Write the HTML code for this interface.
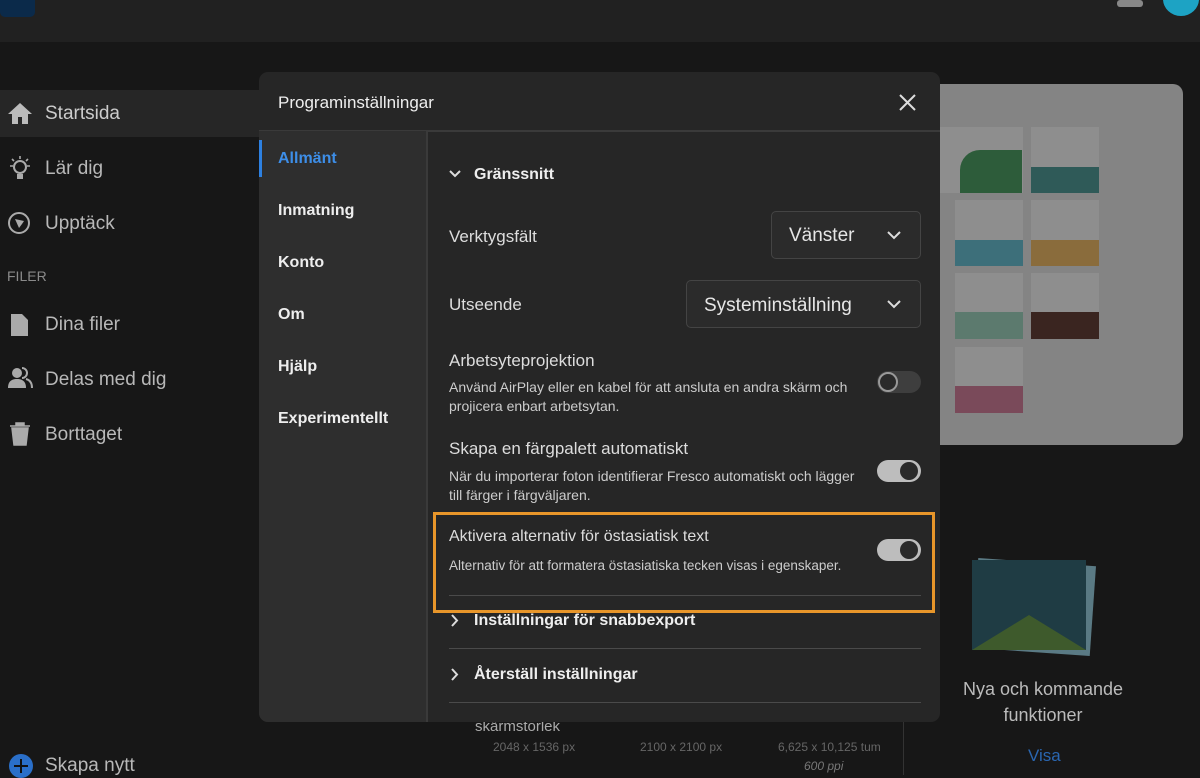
<!DOCTYPE html>
<html><head><meta charset="utf-8"><style>
*{margin:0;padding:0;box-sizing:border-box}
body{width:1200px;height:775px;overflow:hidden;background:#171717;font-family:"Liberation Sans",sans-serif;position:relative;color:#ddd}
.a{position:absolute}
.top{left:0;top:0;width:1200px;height:42px;background:#212121}
.side{color:#b8b8b8;font-size:19px}
.dlg{left:259px;top:72px;width:681px;height:650px;background:#262626;border-radius:9px;overflow:hidden}
.nav{left:0;top:59px;width:169px;height:600px;background:#2e2e2e;border-right:2px solid #3a3a3a}
.nav div{position:absolute;left:19px;font-weight:bold;font-size:16px;color:#eee}
.lbl{font-size:17px;color:#ddd}
.desc{font-size:14px;color:#ccc;line-height:19px}
.dd{border:1px solid #444;border-radius:5px;background:#2b2b2b;font-size:19px;color:#e6e6e6}
.tg{width:44px;height:22px;border-radius:11px}
.line{height:1px;background:#4a4a4a;left:190px;width:472px}
</style></head><body>
<div class="a top"></div>
<div class="a" style="left:0;top:-10px;width:35px;height:27px;background:#0b2a4a;border-radius:5px"></div>
<div class="a" style="left:1117px;top:0;width:26px;height:7px;background:#888;border-radius:3px"></div>
<div class="a" style="left:1163px;top:-18px;width:36px;height:34px;background:#1da3c4;border-radius:50%"></div>
<div class="a" style="left:0;top:90px;width:260px;height:47px;background:#262626"></div>
<svg class="a" style="left:7px;top:102px" width="26" height="24" viewBox="0 0 26 24"><path d="M13 1 L1 12 H5 V22 H11 V15 H15 V22 H21 V12 H25 Z" fill="#bbb"/></svg>
<div class="a side" style="left:45px;top:103px;color:#ccc">Startsida</div>
<svg class="a" style="left:7px;top:155px" width="26" height="28" viewBox="0 0 26 28"><circle cx="13" cy="12" r="6" fill="none" stroke="#aaa" stroke-width="2"/><path d="M10 19h6v5h-6z" fill="#aaa"/><path d="M13 1v3M3 11h3M20 11h3M5 4l2 2M21 4l-2 2" stroke="#aaa" stroke-width="1.6"/></svg>
<div class="a side" style="left:45px;top:158px">Lär dig</div>
<svg class="a" style="left:7px;top:211px" width="26" height="26"><circle cx="12" cy="12" r="10" fill="none" stroke="#aaa" stroke-width="2"/><path d="M8 8l9 2-2 3-3 4z" fill="#aaa"/></svg>
<div class="a side" style="left:45px;top:213px">Upptäck</div>
<div class="a" style="left:7px;top:268px;font-size:14px;color:#8a8a8a">FILER</div>
<svg class="a" style="left:10px;top:313px" width="20" height="24"><path d="M1 1h11l6 6v16H1z" fill="#aaa"/></svg>
<div class="a side" style="left:45px;top:314px">Dina filer</div>
<svg class="a" style="left:7px;top:366px" width="26" height="24"><circle cx="10" cy="7" r="5" fill="#aaa"/><path d="M1 22c0-7 4-9 9-9s9 2 9 9z" fill="#aaa"/><path d="M15 2a5 5 0 010 10M19 13c4 1 6 4 6 9" stroke="#aaa" stroke-width="2" fill="none"/></svg>
<div class="a side" style="left:45px;top:369px">Delas med dig</div>
<svg class="a" style="left:9px;top:422px" width="22" height="24"><path d="M1 4h20M7 4V1h8v3M3 6l2 17h12l2-17z" fill="#aaa" stroke="#aaa" stroke-width="1.5"/></svg>
<div class="a side" style="left:45px;top:424px">Borttaget</div>
<div class="a" style="left:9px;top:754px;width:24px;height:24px;border-radius:50%;background:#2a6fc9"></div>
<div class="a" style="left:14px;top:765px;width:14px;height:2px;background:#111"></div>
<div class="a" style="left:20px;top:759px;width:2px;height:14px;background:#111"></div>
<div class="a side" style="left:45px;top:755px">Skapa nytt</div>

<!-- background right panel -->
<div class="a" style="left:900px;top:84px;width:283px;height:361px;background:#848484;border-radius:10px"></div>
<div class="a" style="left:940px;top:127px;width:83px;height:66px;background:#8e8e8e"></div>
<div class="a" style="left:960px;top:150px;width:62px;height:43px;background:#2d5c3a;border-radius:20px 0 0 0"></div>
<div class="a" style="left:1031px;top:127px;width:68px;height:66px;background:#8e8e8e"></div>
<div class="a" style="left:1031px;top:167px;width:68px;height:26px;background:#2f5a58"></div>
<div class="a" style="left:955px;top:200px;width:68px;height:66px;background:#8e8e8e"></div>
<div class="a" style="left:955px;top:240px;width:68px;height:26px;background:#3d6f7a"></div>
<div class="a" style="left:1031px;top:200px;width:68px;height:66px;background:#8e8e8e"></div>
<div class="a" style="left:1031px;top:240px;width:68px;height:26px;background:#8a6c3c"></div>
<div class="a" style="left:955px;top:273px;width:68px;height:66px;background:#8e8e8e"></div>
<div class="a" style="left:955px;top:312px;width:68px;height:27px;background:#5c7a6e"></div>
<div class="a" style="left:1031px;top:273px;width:68px;height:66px;background:#8e8e8e"></div>
<div class="a" style="left:1031px;top:312px;width:68px;height:27px;background:#3a2520"></div>
<div class="a" style="left:955px;top:347px;width:68px;height:66px;background:#8e8e8e"></div>
<div class="a" style="left:955px;top:386px;width:68px;height:27px;background:#7a4a5a"></div>
<div class="a" style="left:975px;top:562px;width:118px;height:90px;background:#5a7a84;transform:rotate(4deg)"></div>
<div class="a" style="left:972px;top:560px;width:114px;height:90px;background:#1f3c44"></div>
<div class="a" style="left:972px;top:615px;width:114px;height:35px;background:#3e5a2c;clip-path:polygon(50% 0,100% 100%,0 100%)"></div>
<div class="a" style="left:940px;top:676px;width:206px;text-align:center;font-size:18px;color:#bbb;line-height:26px">Nya och kommande funktioner</div>
<div class="a" style="left:1028px;top:746px;font-size:17px;color:#2a66b0">Visa</div>
<div class="a" style="left:903px;top:722px;width:1px;height:53px;background:#333"></div>
<div class="a" style="left:475px;top:718px;font-size:15px;color:#aaa">skärmstorlek</div>
<div class="a" style="left:493px;top:740px;font-size:12px;color:#666">2048 x 1536 px</div>
<div class="a" style="left:640px;top:740px;font-size:12px;color:#666">2100 x 2100 px</div>
<div class="a" style="left:778px;top:740px;font-size:12px;color:#666">6,625 x 10,125 tum</div>
<div class="a" style="left:804px;top:759px;font-size:12px;color:#777;font-style:italic">600 ppi</div>

<!-- dialog -->
<div class="a dlg">
  <div class="a" style="left:19px;top:21px;font-size:17px;color:#eee">Programinställningar</div>
  <svg class="a" style="left:640px;top:22px" width="17" height="17"><path d="M1 1L16 16M16 1L1 16" stroke="#ddd" stroke-width="2"/></svg>
  <div class="a" style="left:0;top:58px;width:681px;height:2px;background:#3a3a3a"></div>
  <div class="a nav">
    <div class="a" style="left:0;top:9px;width:3px;height:37px;background:#2d80e0"></div>
    <div style="top:19px;color:#3d8ee8">Allmänt</div>
    <div style="top:71px">Inmatning</div>
    <div style="top:123px">Konto</div>
    <div style="top:175px">Om</div>
    <div style="top:227px">Hjälp</div>
    <div style="top:279px">Experimentellt</div>
  </div>
  <svg class="a" style="left:190px;top:98px" width="12" height="9"><path d="M1 1l5 5 5-5" stroke="#ddd" stroke-width="2" fill="none"/></svg>
  <div class="a" style="left:215px;top:94px;font-weight:bold;font-size:16px;color:#eee">Gränssnitt</div>
  <div class="a lbl" style="left:190px;top:155px">Verktygsfält</div>
  <div class="a dd" style="left:512px;top:139px;width:150px;height:48px"><span class="a" style="left:17px;top:13px">Vänster</span><svg class="a" style="left:115px;top:19px" width="14" height="9"><path d="M1 1l6 6 6-6" stroke="#ddd" stroke-width="2" fill="none"/></svg></div>
  <div class="a lbl" style="left:190px;top:223px">Utseende</div>
  <div class="a dd" style="left:427px;top:208px;width:235px;height:48px"><span class="a" style="left:17px;top:14px">Systeminställning</span><svg class="a" style="left:200px;top:19px" width="14" height="9"><path d="M1 1l6 6 6-6" stroke="#ddd" stroke-width="2" fill="none"/></svg></div>
  <div class="a lbl" style="left:190px;top:279px">Arbetsyteprojektion</div>
  <div class="a desc" style="left:190px;top:306px;width:420px">Använd AirPlay eller en kabel för att ansluta en andra skärm och projicera enbart arbetsytan.</div>
  <div class="a tg" style="left:618px;top:299px;background:#3e3e3e"><div class="a" style="left:1px;top:1px;width:20px;height:20px;border-radius:50%;border:2px solid #999;background:#2a2a2a"></div></div>
  <div class="a lbl" style="left:190px;top:367px">Skapa en färgpalett automatiskt</div>
  <div class="a desc" style="left:190px;top:395px;width:420px">När du importerar foton identifierar Fresco automatiskt och lägger till färger i färgväljaren.</div>
  <div class="a tg" style="left:618px;top:388px;background:#bdbdbd"><div class="a" style="left:23px;top:2px;width:18px;height:18px;border-radius:50%;background:#2a2a2a"></div></div>
  <div class="a lbl" style="left:190px;top:456px;font-size:16px">Aktivera alternativ för östasiatisk text</div>
  <div class="a desc" style="left:190px;top:484px;font-size:13.5px">Alternativ för att formatera östasiatiska tecken visas i egenskaper.</div>
  <div class="a tg" style="left:618px;top:467px;background:#bdbdbd"><div class="a" style="left:23px;top:2px;width:18px;height:18px;border-radius:50%;background:#2a2a2a"></div></div>
  <div class="a line" style="top:523px"></div>
  <svg class="a" style="left:192px;top:542px" width="8" height="13"><path d="M1 1l5 5.5L1 12" stroke="#ddd" stroke-width="2" fill="none"/></svg>
  <div class="a" style="left:215px;top:540px;font-weight:bold;font-size:16px;color:#eee">Inställningar för snabbexport</div>
  <div class="a line" style="top:576px"></div>
  <svg class="a" style="left:192px;top:596px" width="8" height="13"><path d="M1 1l5 5.5L1 12" stroke="#ddd" stroke-width="2" fill="none"/></svg>
  <div class="a" style="left:215px;top:594px;font-weight:bold;font-size:16px;color:#eee">Återställ inställningar</div>
  <div class="a line" style="top:630px"></div>
</div>
<div class="a" style="left:433px;top:512px;width:502px;height:101px;border:3px solid #e8962a"></div>
</body></html>
